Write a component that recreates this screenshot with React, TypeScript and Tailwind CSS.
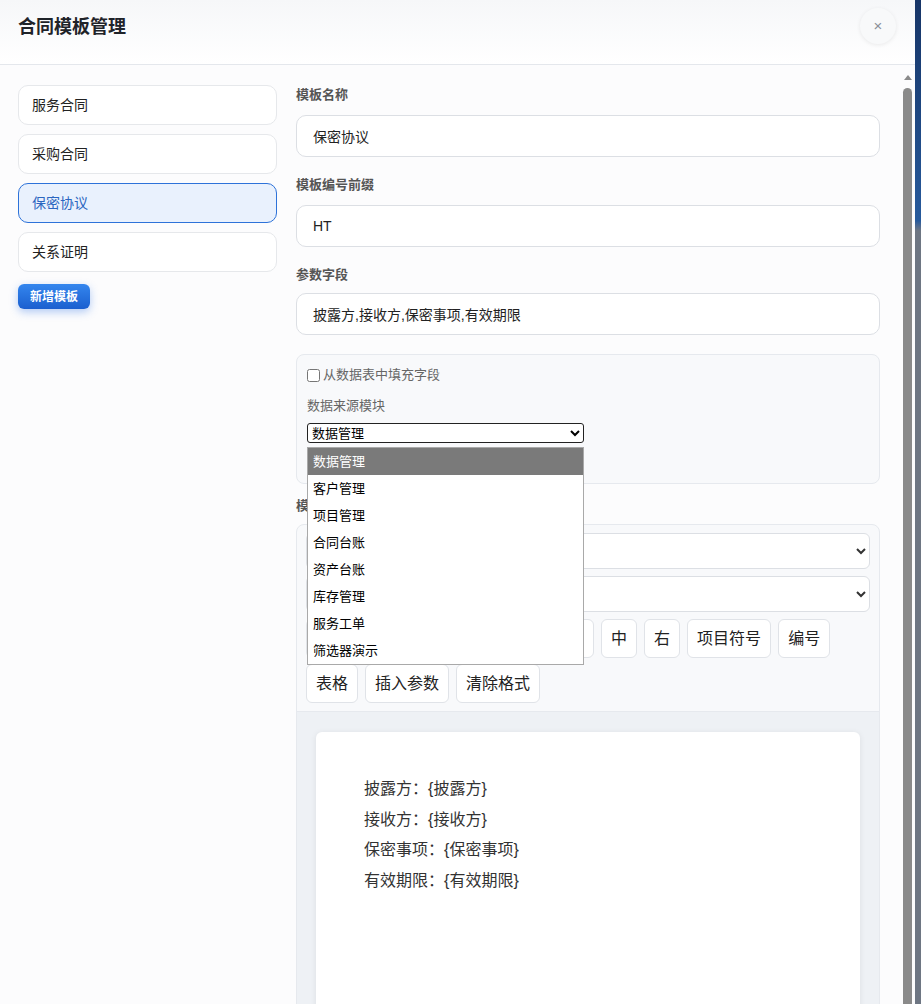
import React, { useState } from 'react';

const templates = ['服务合同', '采购合同', '保密协议', '关系证明'];
const modules = ['数据管理', '客户管理', '项目管理', '合同台账', '资产台账', '库存管理', '服务工单', '筛选器演示'];
const toolbarButtons = ['加粗', '斜体', '下划线', '标题', '左', '中', '右', '项目符号', '编号', '表格', '插入参数', '清除格式'];
const fields = ['披露方', '接收方', '保密事项', '有效期限'];

const font = { fontFamily: '"Liberation Sans", "Noto Sans CJK SC", sans-serif' };

export default function App() {
  const [active, setActive] = useState('保密协议');

  return (
    <div className="flex h-screen overflow-hidden bg-[#6e7683]" style={font}>
      <div className="flex h-[1100px] w-[915px] shrink-0 flex-col bg-white">
        <header className="flex h-[65px] shrink-0 items-start justify-between border-b border-[#e4e7ec] bg-gradient-to-b from-[#f6f7f9] to-white pl-[18px] pr-[19px] pt-[8px]">
          <h1 className="mt-[5px] text-[18px] font-bold leading-7 text-[#1f2329]">合同模板管理</h1>
          <button
            type="button"
            className="flex h-9 w-9 items-center justify-center rounded-full bg-[#f8f9fa] text-[15px] text-[#8a8f98] shadow-[0_1px_4px_rgba(0,0,0,0.08)]"
          >
            ×
          </button>
        </header>

        <div className="flex min-h-0 flex-1 bg-[#fcfcfd]">
          <div className="min-w-0 flex-1 overflow-hidden">
            <div className="grid grid-cols-[259px_1fr] gap-[19px] pb-[80px] pl-[18px] pr-[20px] pt-[20px]">
              <aside className="flex flex-col gap-[9px]">
                {templates.map((name) => (
                  <button
                    key={name}
                    type="button"
                    onClick={() => setActive(name)}
                    className={
                      active === name
                        ? 'h-10 rounded-[10px] border border-[#2d72d9] bg-[#e9f1fd] pl-[13px] text-left text-[14px] text-[#2b66c0]'
                        : 'h-10 rounded-[10px] border border-[#e6e8eb] bg-white pl-[13px] text-left text-[14px] text-[#222]'
                    }
                  >
                    {name}
                  </button>
                ))}
                <button
                  type="button"
                  className="mt-[3px] h-[25px] w-[72px] rounded-md bg-gradient-to-b from-[#3486ee] to-[#1b5fcf] text-[12px] font-bold text-white shadow-[0_3px_8px_rgba(37,110,230,0.35)]"
                >
                  新增模板
                </button>
              </aside>

              <main>
                <label className="mb-[10px] block text-[13px] font-bold leading-5 text-[#555]">模板名称</label>
                <input
                  defaultValue="保密协议"
                  className="mb-[18px] block h-[42px] w-full rounded-[10px] border border-[#dcdfe4] bg-white pl-4 text-[14px] text-[#222] outline-none"
                />
                <label className="mb-[10px] block text-[13px] font-bold leading-5 text-[#555]">模板编号前缀</label>
                <input
                  defaultValue="HT"
                  className="mb-[18px] block h-[42px] w-full rounded-[10px] border border-[#dcdfe4] bg-white pl-4 text-[14px] text-[#222] outline-none"
                />
                <label className="mb-[8px] block text-[13px] font-bold leading-5 text-[#555]">参数字段</label>
                <input
                  defaultValue="披露方,接收方,保密事项,有效期限"
                  className="mb-[19px] block h-[42px] w-full rounded-[10px] border border-[#dcdfe4] bg-white pl-4 text-[14px] text-[#222] outline-none"
                />

                <div className="relative mb-[12px] h-[130px] rounded-[8px] border border-[#e6e9ee] bg-[#f8f9fb] px-[10px] pt-[10px]">
                  <label className="flex items-center gap-[3px] text-[13px] leading-5 text-[#666]">
                    <input type="checkbox" className="h-[13px] w-[13px]" />
                    从数据表中填充字段
                  </label>
                  <div className="mt-[11px] text-[13px] leading-5 text-[#666]">数据来源模块</div>
                  <select
                    defaultValue="数据管理"
                    className="mt-[7px] block h-5 w-[277px] rounded-[3px] border border-[#222] bg-white text-[13px] text-black"
                  >
                    {modules.map((m) => (
                      <option key={m}>{m}</option>
                    ))}
                  </select>
                  <ul className="absolute left-[10px] top-[92px] z-10 w-[277px] border border-[#a9a9a9] bg-white text-[13px] text-black">
                    {modules.map((m, i) => (
                      <li
                        key={m}
                        className={
                          i === 0
                            ? 'flex h-[27px] items-center bg-[#7a7a7a] pl-[5px] text-white'
                            : 'flex h-[27px] items-center pl-[5px]'
                        }
                      >
                        {m}
                      </li>
                    ))}
                  </ul>
                </div>

                <label className="mb-[8px] block text-[13px] font-bold leading-5 text-[#555]">模板内容</label>
                <div className="rounded-t-[8px] border border-[#e6e9ee] bg-[#f8f9fb]">
                  <div className="flex flex-col gap-[7px] border-b border-[#e6e9ee] px-[9px] pb-[8px] pt-[8px]">
                    <select className="h-9 w-full rounded-md border border-[#dcdfe4] bg-white px-2 text-[14px] text-[#333]">
                      <option>正文</option>
                    </select>
                    <select className="h-9 w-full rounded-md border border-[#dcdfe4] bg-white px-2 text-[14px] text-[#333]">
                      <option>默认字体</option>
                    </select>
                    <div className="flex flex-wrap gap-x-[7px] gap-y-[6px]">
                      {toolbarButtons.map((b) => (
                        <button
                          key={b}
                          type="button"
                          className="h-[39px] rounded-md border border-[#e0e3e8] bg-white px-[9px] text-[16px] text-[#222]"
                        >
                          {b}
                        </button>
                      ))}
                    </div>
                  </div>
                  <div className="bg-[#eef1f5] px-[19px] pt-[20px]">
                    <div className="min-h-[420px] rounded-t-[6px] bg-white pl-12 pt-[42px] shadow-[0_1px_6px_rgba(0,0,0,0.08)]">
                      {fields.map((f) => (
                        <p key={f} className="text-[16px] leading-[30.5px] text-[#333]">
                          {f}：{'{'}
                          {f}
                          {'}'}
                        </p>
                      ))}
                    </div>
                  </div>
                </div>
              </main>
            </div>
          </div>

          {/* fake native scrollbar */}
          <div className="flex w-[15px] shrink-0 flex-col items-center pt-[10px]">
            <div className="h-0 w-0 border-x-[4px] border-b-[5px] border-x-transparent border-b-[#8a8a8a]" />
            <div className="mt-[8px] w-[9px] flex-1 rounded-t-full bg-[#8a8a8a]" />
          </div>
        </div>
      </div>
      <div className="h-full flex-1 bg-gradient-to-b from-[#173567] via-[#275a9c] via-[22%] to-[#6e7683] to-[23%]" />
    </div>
  );
}
